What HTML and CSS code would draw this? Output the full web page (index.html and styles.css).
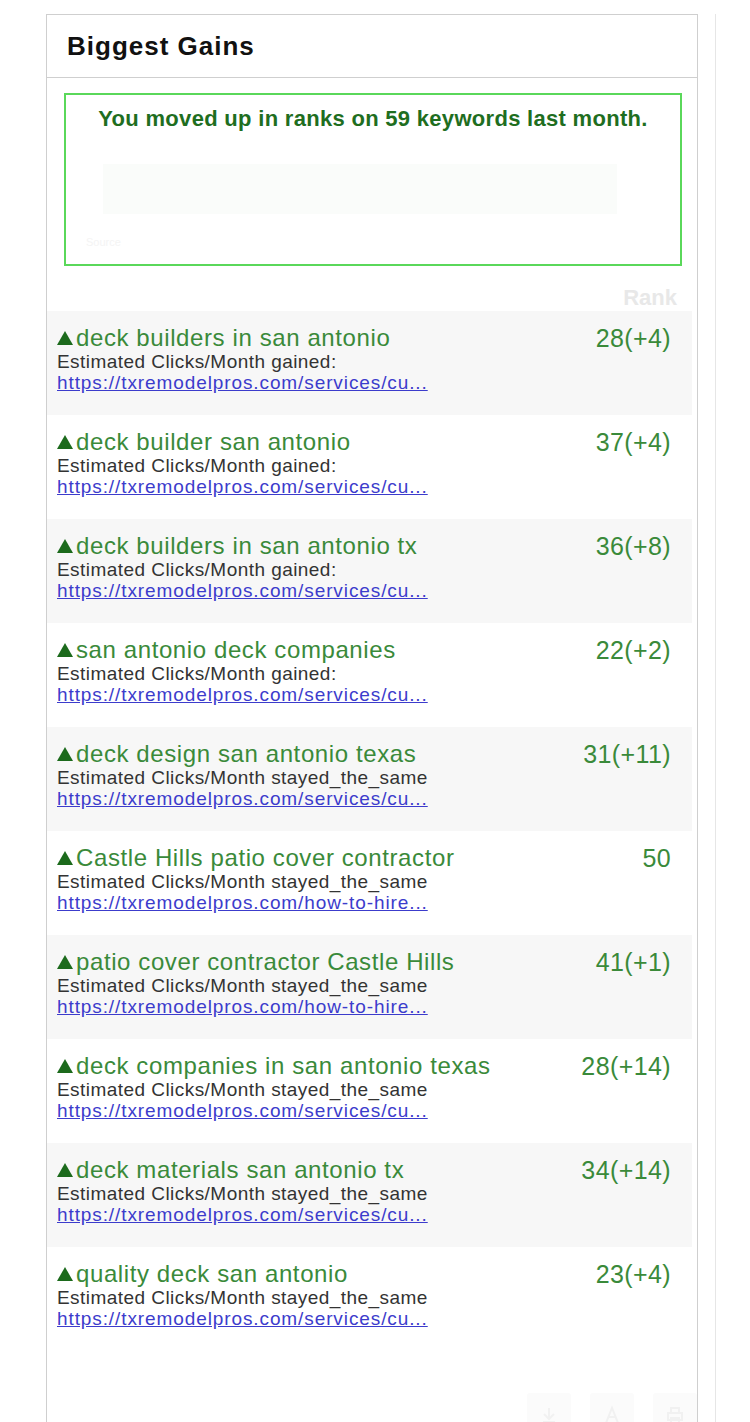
FILE: index.html
```html
<!DOCTYPE html>
<html>
<head>
<meta charset="utf-8">
<link rel="stylesheet" href="styles.css">
</head>
<body>
<div class="page">
  <section class="panel">
    <header class="panel-head"><h2 class="panel-title">Biggest Gains</h2></header>
    <div class="panel-body">
      <div class="summary">
        <p class="summary-text">You moved up in ranks on 59 keywords last month.</p>
        <div class="summary-chart"></div>
        <div class="summary-foot">Source</div>
      </div>
      <div class="rank-head">Rank</div>
      <ul class="rows">
        <li class="row alt"><div class="row-main"><div class="kw"><svg class="tri" viewBox="0 0 16 14" width="16" height="14"><path d="M8 0L16 14H0z"/></svg>deck builders in san antonio</div><div class="est">Estimated Clicks/Month gained:</div><a class="url" href="#">https://txremodelpros.com/services/cu...</a></div><div class="rank">28(+4)</div></li>
        <li class="row"><div class="row-main"><div class="kw"><svg class="tri" viewBox="0 0 16 14" width="16" height="14"><path d="M8 0L16 14H0z"/></svg>deck builder san antonio</div><div class="est">Estimated Clicks/Month gained:</div><a class="url" href="#">https://txremodelpros.com/services/cu...</a></div><div class="rank">37(+4)</div></li>
        <li class="row alt"><div class="row-main"><div class="kw"><svg class="tri" viewBox="0 0 16 14" width="16" height="14"><path d="M8 0L16 14H0z"/></svg>deck builders in san antonio tx</div><div class="est">Estimated Clicks/Month gained:</div><a class="url" href="#">https://txremodelpros.com/services/cu...</a></div><div class="rank">36(+8)</div></li>
        <li class="row"><div class="row-main"><div class="kw"><svg class="tri" viewBox="0 0 16 14" width="16" height="14"><path d="M8 0L16 14H0z"/></svg>san antonio deck companies</div><div class="est">Estimated Clicks/Month gained:</div><a class="url" href="#">https://txremodelpros.com/services/cu...</a></div><div class="rank">22(+2)</div></li>
        <li class="row alt"><div class="row-main"><div class="kw"><svg class="tri" viewBox="0 0 16 14" width="16" height="14"><path d="M8 0L16 14H0z"/></svg>deck design san antonio texas</div><div class="est">Estimated Clicks/Month stayed_the_same</div><a class="url" href="#">https://txremodelpros.com/services/cu...</a></div><div class="rank">31(+11)</div></li>
        <li class="row"><div class="row-main"><div class="kw"><svg class="tri" viewBox="0 0 16 14" width="16" height="14"><path d="M8 0L16 14H0z"/></svg>Castle Hills patio cover contractor</div><div class="est">Estimated Clicks/Month stayed_the_same</div><a class="url" href="#">https://txremodelpros.com/how-to-hire...</a></div><div class="rank">50</div></li>
        <li class="row alt"><div class="row-main"><div class="kw"><svg class="tri" viewBox="0 0 16 14" width="16" height="14"><path d="M8 0L16 14H0z"/></svg>patio cover contractor Castle Hills</div><div class="est">Estimated Clicks/Month stayed_the_same</div><a class="url" href="#">https://txremodelpros.com/how-to-hire...</a></div><div class="rank">41(+1)</div></li>
        <li class="row"><div class="row-main"><div class="kw"><svg class="tri" viewBox="0 0 16 14" width="16" height="14"><path d="M8 0L16 14H0z"/></svg>deck companies in san antonio texas</div><div class="est">Estimated Clicks/Month stayed_the_same</div><a class="url" href="#">https://txremodelpros.com/services/cu...</a></div><div class="rank">28(+14)</div></li>
        <li class="row alt"><div class="row-main"><div class="kw"><svg class="tri" viewBox="0 0 16 14" width="16" height="14"><path d="M8 0L16 14H0z"/></svg>deck materials san antonio tx</div><div class="est">Estimated Clicks/Month stayed_the_same</div><a class="url" href="#">https://txremodelpros.com/services/cu...</a></div><div class="rank">34(+14)</div></li>
        <li class="row"><div class="row-main"><div class="kw"><svg class="tri" viewBox="0 0 16 14" width="16" height="14"><path d="M8 0L16 14H0z"/></svg>quality deck san antonio</div><div class="est">Estimated Clicks/Month stayed_the_same</div><a class="url" href="#">https://txremodelpros.com/services/cu...</a></div><div class="rank">23(+4)</div></li>
      </ul>
      <div class="tools">
        <span class="tool"><svg viewBox="0 0 20 20" width="20" height="20"><path d="M10 3v11M5 9l5 5 5-5M4 17h12" fill="none" stroke="#f1f1f1" stroke-width="2"/></svg></span>
        <span class="tool"><svg viewBox="0 0 20 20" width="20" height="20"><path d="M4 18L10 3l6 15M6.5 12h7" fill="none" stroke="#f1f1f1" stroke-width="2"/></svg></span>
        <span class="tool"><svg viewBox="0 0 20 20" width="20" height="20"><path d="M6 8V3h8v5M3 8h14v7H3zM6 13h8v5H6z" fill="none" stroke="#f1f1f1" stroke-width="2"/></svg></span>
      </div>
    </div>
  </section>
  <div class="side"></div>
</div>
</body>
</html>
```
FILE: styles.css
```css
html, body {
  margin: 0;
  padding: 0;
  background: #ffffff;
}
body {
  font-family: "Liberation Sans", Arial, sans-serif;
}
.page {
  display: flex;
  align-items: flex-start;
  padding: 14px 0 0 46px;
  height: 1408px;
  overflow: hidden;
}
.panel {
  width: 652px;
  border: 1px solid #cfcfcf;
  border-bottom: none;
  min-height: 1420px;
  box-sizing: border-box;
}
.panel-head {
  height: 62px;
  border-bottom: 1px solid #cfcfcf;
  display: flex;
  align-items: center;
  padding-left: 20px;
}
.panel-title {
  margin: 0;
  font-size: 26px;
  font-weight: bold;
  color: #111;
  letter-spacing: 1px;
}
.panel-body {
  padding-top: 15px;
  position: relative;
  min-height: 1340px;
}
.summary {
  margin: 0 15px 0 17px;
  height: 173px;
  border: 2px solid #5ad85a;
  box-sizing: border-box;
  display: flex;
  flex-direction: column;
  align-items: center;
}
.summary-text {
  margin: 11px 0 0;
  font-size: 22px;
  font-weight: bold;
  color: #1f6e1f;
  letter-spacing: 0.3px;
}
.summary-chart {
  align-self: flex-start;
  width: 514px;
  height: 50px;
  margin: 32px 0 0 37px;
  background: #fafcfa;
}
.summary-foot {
  align-self: flex-start;
  margin: 22px 0 0 20px;
  font-size: 11px;
  color: #f4f4f4;
}
.rank-head {
  text-align: right;
  padding-right: 20px;
  margin-top: 19px;
  height: 26px;
  font-size: 22px;
  font-weight: bold;
  color: #e8e8e8;
}
.rows {
  list-style: none;
  margin: 0 5px 0 0;
  padding: 0;
}
.row {
  height: 104px;
  box-sizing: border-box;
  padding: 14px 21px 0 10px;
  display: flex;
  justify-content: space-between;
  align-items: flex-start;
}
.row.alt {
  background: #f7f7f7;
}
.row-main {
  display: flex;
  flex-direction: column;
  align-items: flex-start;
}
.kw {
  font-size: 24px;
  line-height: 26px;
  color: #3a8a3a;
  letter-spacing: 0.6px;
  display: flex;
  align-items: center;
}
.tri {
  fill: #1c6a1c;
  margin: 0 3px 1px 0;
  flex: none;
}
.est {
  font-size: 19px;
  line-height: 21px;
  color: #333;
  letter-spacing: 0.45px;
}
.url {
  font-size: 19px;
  line-height: 22px;
  color: #3c3ccc;
  text-decoration: underline;
  letter-spacing: 0.9px;
}
.rank {
  font-size: 25px;
  line-height: 26px;
  color: #3a8a3a;
  letter-spacing: 0.4px;
}
.tools {
  position: absolute;
  right: 0;
  top: 1315px;
  display: flex;
  gap: 19px;
}
.tool {
  width: 44px;
  height: 44px;
  background: #fbfbfb;
  border-radius: 3px;
  display: flex;
  align-items: center;
  justify-content: center;
}
.side {
  margin-left: 17px;
  width: 1px;
  height: 1420px;
  background: #e6e6e6;
}
```
